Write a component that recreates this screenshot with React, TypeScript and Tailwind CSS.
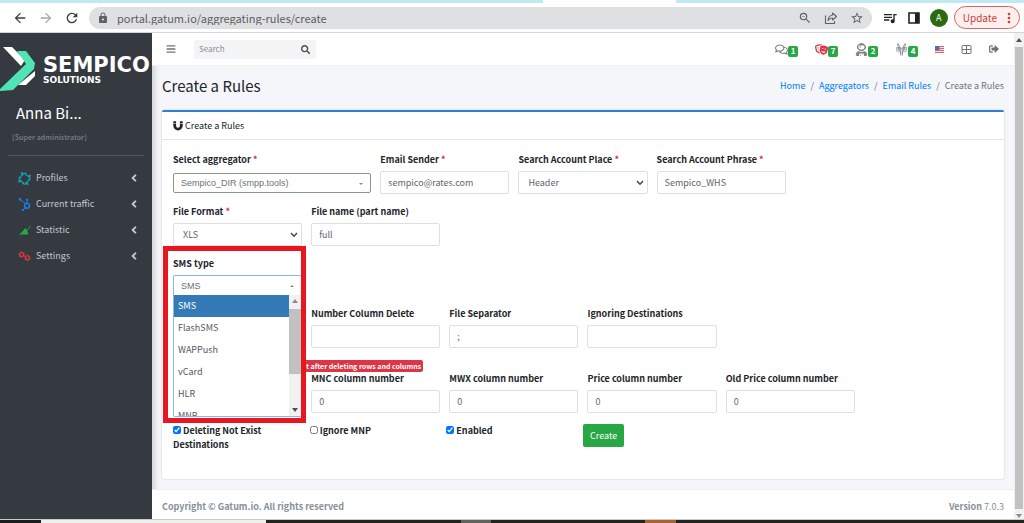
import { useState, type ReactNode } from "react";
import type { IconType } from "react-icons";
import {
  FaAngleLeft,
  FaBars,
  FaHornbill,
  FaHubspot,
  FaRegComments,
  FaSearch,
  FaSignOutAlt,
  FaTheaterMasks,
  FaUserAstronaut,
  FaWolfPackBattalion,
} from "react-icons/fa";
import {
  MdArrowBack,
  MdArrowForward,
  MdLock,
  MdMoreVert,
  MdOutlineZoomOut,
  MdQueueMusic,
  MdRefresh,
  MdStarBorder,
} from "react-icons/md";

type MenuIcon = (props: { className?: string }) => ReactNode;

const smsTypes = ["SMS", "FlashSMS", "WAPPush", "vCard", "HLR", "MNP"];

const menuItems: { label: string; icon: MenuIcon; color: string }[] = [
  { label: "Profiles", icon: FaHornbill, color: "text-[#17a2b8]" },
  { label: "Current traffic", icon: FaHubspot, color: "text-[#1f7cf0]" },
  { label: "Statistic", icon: StatisticIcon, color: "text-[#28a745]" },
  { label: "Settings", icon: GearsIcon, color: "text-[#dc3545]" },
];

const notifications: { label: string; count: number; icon: IconType; color: string }[] = [
  { label: "Messages", count: 1, icon: FaRegComments, color: "text-[#808488]" },
  { label: "Incidents", count: 7, icon: FaTheaterMasks, color: "text-[#dc3545]" },
  { label: "Users", count: 2, icon: FaUserAstronaut, color: "text-[#808488]" },
  { label: "Tasks", count: 4, icon: FaWolfPackBattalion, color: "text-[#909498]" },
];

const controlClassName =
  "block h-[23px] w-full rounded-xs border border-[#dcdfe3] bg-white px-[7px] text-[9px] text-[#5f656c] outline-none";

export default function App() {
  return (
    <div className="flex min-h-screen flex-col bg-white font-['Noto_Sans_CJK_SC','Noto_Sans',sans-serif] text-[9px] leading-[14px] text-[#212529]">
      <BrowserBar />
      <div className="flex flex-1">
        <Sidebar />
        <div className="flex min-w-0 flex-1 flex-col bg-[#f4f6f9] shadow-[inset_6px_0_6px_-4px_rgb(0_0_0/0.18)]">
          <Navbar />
          <main className="flex flex-1 flex-col px-2.5 pb-2.5">
            <div className="flex h-11 items-center justify-between pb-1">
              <h1 className="text-[15px] leading-5">Create a Rules</h1>
              <Breadcrumbs />
            </div>
            <RulesCard />
          </main>
          <footer className="flex h-[30px] items-center justify-between border-t border-[#eceef1] bg-white px-2.5 pt-1 text-[#869099]">
            <strong>Copyright © Gatum.io. All rights reserved</strong>
            <span>
              <b>Version</b> 7.0.3
            </span>
          </footer>
        </div>
        <PageScrollbar />
      </div>
      <div aria-hidden="true" className="flex h-1 border-t border-[#c9ccc9] bg-[#22251f]">
        <div className="w-[4%] bg-[#1b1c1b]" />
        <div className="w-[22%] bg-[#eef0ec]" />
        <div className="w-[19%]" />
        <div className="w-[3%] bg-[#60635e]" />
        <div className="w-[15%]" />
        <div className="w-[3%] bg-[#a8642c]" />
      </div>
    </div>
  );
}

function BrowserBar() {
  return (
    <header className="border-b border-[#d4d5d8] text-[#3c4043]">
      <div aria-hidden="true" className="flex h-[3px] bg-[#c2e8f3]">
        <div className="ml-[53%] w-[13%] bg-white" />
      </div>
      <div className="flex h-[29px] items-center">
        <div className="flex w-[89px] items-center gap-2.5 pl-3">
          <button type="button" aria-label="Back">
            <MdArrowBack className="size-4" />
          </button>
          <button type="button" aria-label="Forward" className="text-[#a5a7aa]">
            <MdArrowForward className="size-4" />
          </button>
          <button type="button" aria-label="Reload">
            <MdRefresh className="size-4" />
          </button>
        </div>
        <div className="flex h-[22px] min-w-0 flex-1 items-center rounded-full bg-[#dfe0e2] pr-2 pl-2">
          <MdLock className="size-3 text-[#5f6368]" />
          <input
            aria-label="Address"
            className="ml-2 min-w-0 flex-1 bg-transparent text-[11px] text-[#5a5e63] outline-none"
            defaultValue="portal.gatum.io/aggregating-rules/create"
          />
          <div className="flex items-center gap-3 text-[#5f6368]">
            <MdOutlineZoomOut className="size-3.5" />
            <ShareIcon />
            <MdStarBorder className="size-3.5" />
          </div>
        </div>
        <div className="flex items-center gap-2.5 pr-1 pl-2.5">
          <MdQueueMusic className="size-4 text-[#202124]" />
          <SidePanelIcon />
          <span className="flex size-[18px] items-center justify-center rounded-full bg-[#2c6a12] text-[9px] text-white">
            A
          </span>
          <button
            type="button"
            className="-ml-1 flex h-[23px] items-center gap-1 rounded-full border border-[#d96560] bg-[#fcefee] pr-0.5 pl-2 text-[10px] text-[#c5423b]"
          >
            Update
            <MdMoreVert className="size-4" />
          </button>
        </div>
      </div>
    </header>
  );
}

function Sidebar() {
  return (
    <aside className="w-[152px] shrink-0 overflow-hidden bg-[#343a40] text-[#c2c7d0]">
      <div className="flex h-[66px] items-center pt-2">
        <LogoMark />
        <div className="font-['DejaVu_Sans',sans-serif] font-bold text-white">
          <p className="text-[21px] leading-5">SEMPICO</p>
          <p className="text-[9px] leading-2.5">SOLUTIONS</p>
        </div>
      </div>
      <div className="mx-2 border-b border-[#4f565e] pb-3">
        <p className="pt-1 pl-2 text-[15px] leading-5 text-white">Anna Bi...</p>
        <p className="mt-2 pl-1 text-[7px] leading-3 font-bold text-[#70767d]">[Super administrator]</p>
      </div>
      <nav className="pt-[9px]">
        {menuItems.map(({ label, icon: Icon, color }) => (
          <a key={label} href="#" className="flex h-[26px] items-center pr-3 pl-[18px]">
            <Icon className={`size-[13px] ${color}`} />
            <span className="ml-[5px] flex-1">{label}</span>
            <FaAngleLeft className="size-3" />
          </a>
        ))}
      </nav>
    </aside>
  );
}

function Navbar() {
  return (
    <div className="flex h-[33px] items-center border-b border-[#eef0f2] bg-white pr-[15px] pl-3.5 text-[#6c7278]">
      <button type="button" aria-label="Toggle menu">
        <FaBars className="size-2.5" />
      </button>
      <form className="ml-[18px] flex h-[19px] w-[122px] items-center rounded-xs bg-[#f2f4f6] pr-1.5 pl-[5px]">
        <input
          aria-label="Search"
          placeholder="Search"
          className="min-w-0 flex-1 bg-transparent text-[8px] outline-none placeholder:text-[#8b9096]"
        />
        <button type="button" aria-label="Submit search">
          <FaSearch className="size-[9px] text-[#4a4f54]" />
        </button>
      </form>
      <div className="ml-auto flex items-center gap-[17px]">
        {notifications.map(({ label, count, icon: Icon, color }) => (
          <a key={label} href="#" aria-label={label} className="flex items-center">
            <Icon className={`size-[13px] ${color}`} />
            <span className="mt-1 flex h-[11px] w-2.5 items-center justify-center rounded-xs bg-[#28a745] text-[8px] font-bold text-white">
              {count}
            </span>
          </a>
        ))}
        <a href="#" aria-label="Language">
          <FlagIcon />
        </a>
        <a href="#" aria-label="Layout">
          <GridIcon />
        </a>
        <a href="#" aria-label="Sign out">
          <FaSignOutAlt aria-hidden="true" className="size-2.5" />
        </a>
      </div>
    </div>
  );
}

function Breadcrumbs() {
  return (
    <nav aria-label="Breadcrumb">
      <ol className="flex gap-[5px] text-[#007bff]">
        {["Home", "Aggregators", "Email Rules"].map((label) => (
          <li key={label} className="flex gap-[5px]">
            <a href="#">{label}</a>
            <span className="text-[#6c757d]">/</span>
          </li>
        ))}
        <li className="text-[#6c757d]">Create a Rules</li>
      </ol>
    </nav>
  );
}

function RulesCard() {
  return (
    <section className="flex-1 rounded-xs border-t-2 border-[#2a80dc] bg-white shadow-[0_0_2px_rgb(0_0_0/0.2)]">
      <h2 className="flex h-7 items-center gap-0.5 border-b border-[#e3e5e8] px-[11px]">
        <MagnetIcon />
        Create a Rules
      </h2>
      <form className="px-[11px] pt-[13px] pb-6">
        <div className="grid grid-cols-12 gap-x-[9px] gap-y-[11px]">
          <Field id="aggregator" label="Select aggregator" required className="col-span-3">
            <div className="relative flex h-[23px] items-center">
              <select
                id="aggregator"
                className="h-5 w-full appearance-none rounded-xs border border-[#7d9f7f] bg-white px-[7px] font-['Liberation_Sans',sans-serif] text-[9px] text-[#6b7178]"
              >
                <option>Sempico_DIR (smpp.tools)</option>
              </select>
              <Caret />
            </div>
          </Field>
          <Field id="sender" label="Email Sender" required>
            <input id="sender" className={controlClassName} defaultValue="sempico@rates.com" />
          </Field>
          <Field id="place" label="Search Account Place" required>
            <Select id="place" value="Header" />
          </Field>
          <Field id="phrase" label="Search Account Phrase" required>
            <input id="phrase" className={controlClassName} defaultValue="Sempico_WHS" />
          </Field>
          <Field id="format" label="File Format" required className="col-span-2 col-start-1">
            <Select id="format" value="XLS" />
          </Field>
          <Field id="filename" label="File name (part name)">
            <input id="filename" className={controlClassName} defaultValue="full" />
          </Field>
          <SmsTypeField />
        </div>

        <div className="mt-3 grid grid-cols-12 gap-x-[9px]">
          <Field id="columns" label="Number Column Delete" className="col-span-2 col-start-3">
            <input id="columns" className={controlClassName} />
          </Field>
          <Field id="separator" label="File Separator">
            <input id="separator" className={controlClassName} defaultValue=";" />
          </Field>
          <Field id="ignoring" label="Ignoring Destinations">
            <input id="ignoring" className={controlClassName} />
          </Field>
        </div>

        <div className="mt-3 flex pl-[131px]">
          <span className="h-3 rounded-xs bg-[#dc3545] px-0.5 text-[7px] leading-3 font-bold text-white">
            t after deleting rows and columns
          </span>
        </div>

        <div className="grid grid-cols-12 gap-x-[9px]">
          <Field id="mnc" label="MNC column number" className="col-span-2 col-start-3">
            <input id="mnc" className={controlClassName} defaultValue="0" />
          </Field>
          <Field id="mwx" label="MWX column number">
            <input id="mwx" className={controlClassName} defaultValue="0" />
          </Field>
          <Field id="price" label="Price column number">
            <input id="price" className={controlClassName} defaultValue="0" />
          </Field>
          <Field id="old-price" label="Old Price column number">
            <input id="old-price" className={controlClassName} defaultValue="0" />
          </Field>
        </div>

        <div className="mt-[11px] grid grid-cols-6 items-start">
          <Checkbox label="Deleting Not Exist Destinations" defaultChecked />
          <Checkbox label="Ignore MNP" />
          <Checkbox label="Enabled" defaultChecked />
          <button
            type="button"
            className="h-[23px] justify-self-start rounded-xs bg-[#28a745] px-[7px] text-white"
          >
            Create
          </button>
        </div>
      </form>
    </section>
  );
}

type FieldProps = {
  id: string;
  label: string;
  required?: boolean;
  className?: string;
  children: ReactNode;
};

function Field({ id, label, required = false, className = "col-span-2", children }: FieldProps) {
  return (
    <div className={className}>
      <label htmlFor={id} className="mb-1 block font-bold whitespace-nowrap">
        {label}
        {required ? <span className="text-[#e0202a]"> *</span> : null}
      </label>
      {children}
    </div>
  );
}

function Select({ id, value }: { id: string; value: string }) {
  return (
    <div className="relative">
      <select id={id} className={`${controlClassName} appearance-none pl-[9px]`}>
        <option>{value}</option>
      </select>
      <svg
        aria-hidden="true"
        viewBox="0 0 8 6"
        className="pointer-events-none absolute top-[9px] right-1 h-1.5 w-2 text-[#3f4449]"
      >
        <path d="M1 1l3 3.2L7 1" fill="none" stroke="currentColor" strokeWidth="1.4" />
      </svg>
    </div>
  );
}

function SmsTypeField() {
  const [smsType, setSmsType] = useState("SMS");

  return (
    <div className="relative z-10 col-span-2 col-start-1">
      <label htmlFor="sms-type" className="mb-1 block font-bold">
        SMS type
      </label>
      <div className="relative">
        <select
          id="sms-type"
          value={smsType}
          onChange={(event) => setSmsType(event.target.value)}
          className="block h-5 w-full appearance-none rounded-t-xs border border-b-0 border-[#86b7e8] bg-white px-[7px] font-['Liberation_Sans',sans-serif] text-[9px] text-[#6b7178] outline-none"
        >
          {smsTypes.map((type) => (
            <option key={type}>{type}</option>
          ))}
        </select>
        <Caret up />
        <div className="absolute top-full left-0 flex h-[122px] w-full overflow-hidden rounded-b-xs border border-t-0 border-[#86b7e8] bg-white">
          <ul role="listbox" aria-label="SMS type" className="flex-1">
            {smsTypes.map((type) => (
              <li
                key={type}
                role="option"
                aria-selected={type === smsType}
                onClick={() => setSmsType(type)}
                className={`px-1 leading-[22px] ${
                  type === smsType ? "bg-[#337ab7] text-white" : "text-[#55595e]"
                }`}
              >
                {type}
              </li>
            ))}
          </ul>
          <div aria-hidden="true" className="flex w-3 flex-col items-center bg-[#f1f1f1] py-1">
            <Triangle className="text-[#8a8a8a]" />
            <div className="mt-1.5 h-[65px] w-full bg-[#c1c1c1]" />
            <Triangle className="mt-auto rotate-180 text-[#505050]" />
          </div>
        </div>
      </div>
      {/* callout frame round the open list */}
      <div className="pointer-events-none absolute -top-[11px] -right-1 -left-2.5 h-[177px] border-[5px] border-[#e8171f]" />
    </div>
  );
}

function Checkbox({ label, defaultChecked = false }: { label: string; defaultChecked?: boolean }) {
  return (
    <label className="pr-8 font-bold">
      <input type="checkbox" defaultChecked={defaultChecked} className="mr-0.5 size-2 align-baseline" />
      {label}
    </label>
  );
}

function Caret({ up = false }: { up?: boolean }) {
  return (
    <svg
      aria-hidden="true"
      viewBox="0 0 4 2"
      className={`pointer-events-none absolute top-1/2 right-2 h-0.5 w-1 text-[#8a8a8a] ${up ? "rotate-180" : ""}`}
    >
      <path d="M0 0h4L2 2z" fill="currentColor" />
    </svg>
  );
}

function Triangle({ className }: { className: string }) {
  return (
    <svg aria-hidden="true" viewBox="0 0 6 4" className={`h-1 w-1.5 ${className}`}>
      <path d="M0 4L3 0l3 4z" fill="currentColor" />
    </svg>
  );
}

function PageScrollbar() {
  return (
    <div aria-hidden="true" className="flex w-2.5 flex-col items-center bg-[#f1f1f1] pt-[5px] pb-px">
      <Triangle className="text-[#505050]" />
      <div className="my-[5px] w-2 flex-1 bg-[#c1c1c1]" />
      <Triangle className="rotate-180 text-[#8a8a8a]" />
    </div>
  );
}

function LogoMark() {
  return (
    <svg aria-hidden="true" viewBox="0 0 43 48" className="h-12 w-[43px] shrink-0">
      <path d="M3 1h9l13 13-4 6z" fill="#fff" />
      <path d="M17 5h9l9 12-1 6-21 21-13 1v-2l26-25z" fill="#4fe3b5" />
      <path d="M35 25v5l-9 9h-8z" fill="#fff" />
    </svg>
  );
}

function MagnetIcon() {
  return (
    <svg aria-hidden="true" viewBox="0 0 10 10" className="size-2.5">
      <path d="M1.700 2.500v2.300a3.300 3.300 0 0 0 6.600 0V2.500" fill="none" stroke="currentColor" strokeWidth="2.800" />
      <path d="M.3.300h2.800v1.700H.3zM6.900.300h2.800v1.700H6.900z" fill="currentColor" />
    </svg>
  );
}

function StatisticIcon({ className }: { className?: string }) {
  return (
    <svg aria-hidden="true" viewBox="0 0 13 13" className={className}>
      <path d="M.5 10.500L3 9l4.500-5 1.800 2.500 1 4z" fill="currentColor" />
      <path d="M9 6.500L12.500 2" stroke="currentColor" strokeWidth="0.900" />
    </svg>
  );
}

function GearsIcon({ className }: { className?: string }) {
  return (
    <svg aria-hidden="true" viewBox="0 0 13 13" className={className} fill="none" stroke="currentColor">
      <circle cx="3.600" cy="4.600" r="1.900" strokeWidth="1.300" />
      <circle cx="3.600" cy="4.600" r="2.900" strokeWidth="1" strokeDasharray="1.500 1.540" />
      <circle cx="9.400" cy="7.800" r="1.900" strokeWidth="1.300" />
      <circle cx="9.400" cy="7.800" r="2.900" strokeWidth="1" strokeDasharray="1.500 1.540" />
    </svg>
  );
}

function ShareIcon() {
  return (
    <svg
      aria-hidden="true"
      viewBox="0 0 14 14"
      className="size-3.5"
      fill="none"
      stroke="currentColor"
      strokeWidth="1.1"
      strokeLinejoin="round"
    >
      <path d="M1.5 4.5v8h9V10" />
      <path d="M8.5 2l4 3.5-4 3.5V7C6.500 7 5 7.800 4 9.500 4.300 6.500 5.800 4.500 8.500 4z" />
    </svg>
  );
}

function SidePanelIcon() {
  return (
    <svg aria-hidden="true" viewBox="0 0 12 12" className="size-3 text-[#202124]">
      <path d="M1 1h10v10H1z" fill="none" stroke="currentColor" strokeWidth="1.600" />
      <path d="M7 1h4v10H7z" fill="currentColor" />
    </svg>
  );
}

function FlagIcon() {
  return (
    <svg aria-hidden="true" viewBox="0 0 9 7" className="h-[7px] w-[9px]">
      <path d="M0 0h9v7H0z" fill="#f3dede" />
      <path d="M0 .5h9M0 2.500h9M0 4.500h9M0 6.500h9" stroke="#d8686c" />
      <path d="M0 0h4.500v4H0z" fill="#5b6bb0" />
    </svg>
  );
}

function GridIcon() {
  return (
    <svg aria-hidden="true" viewBox="0 0 11 11" className="size-[11px]" fill="none" stroke="currentColor">
      <rect x="1" y="1.500" width="9" height="8" rx="1" />
      <path d="M5.500 1.500v8M1 5.500h9" />
    </svg>
  );
}
